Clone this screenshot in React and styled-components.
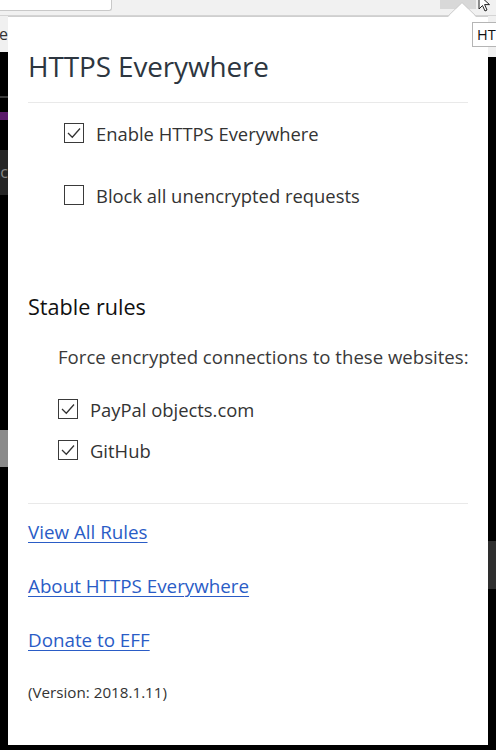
import React from "react";
import styled, { createGlobalStyle } from "styled-components";

const Global = createGlobalStyle`
  html, body { margin: 0; padding: 0; background: #000; }
  body { font-family: "Open Sans", "Noto Sans", sans-serif; }
`;

const Screen = styled.div`
  position: relative;
  width: 496px;
  height: 750px;
  overflow: hidden;
  display: grid;
  grid-template-columns: 8px 480px 8px;
  grid-template-rows: 16px 729px 5px;
  background: #000;
`;

const Toolbar = styled.div`
  grid-column: 1 / 4;
  display: flex;
  align-items: flex-start;
  background: #f1f1f1;
  border-bottom: 1px solid #d4d4d4;
  box-sizing: border-box;
`;

const UrlBox = styled.div`
  width: 111px;
  height: 10px;
  background: #fff;
  border-right: 1px solid #c9c9c9;
  border-bottom: 1px solid #c9c9c9;
  border-bottom-right-radius: 3px;
`;

const ToolButton = styled.div`
  margin-left: auto;
  margin-right: 20px;
  width: 36px;
  height: 9px;
  background: #d8d8d8;
`;

const Gutter = styled.div`
  display: flex;
  flex-direction: column;
  background: #000;
  overflow: hidden;
`;

const GutterPiece = styled.div`
  height: ${(p) => p.$h}px;
  background: ${(p) => p.$bg};
  color: ${(p) => p.$fg || "#333"};
  font-size: 16px;
  line-height: ${(p) => p.$h}px;
  white-space: nowrap;
  direction: rtl;
  overflow: hidden;
`;

const Popup = styled.div`
  position: relative;
  background: #fff;
  border-top: 1px solid #cfcfcf;
  box-sizing: border-box;
  padding: 31px 20px 0;
  display: flex;
  flex-direction: column;
  color: #333;
`;

const Title = styled.h1`
  margin: 0;
  font-weight: 400;
  font-size: 27.9px;
  line-height: 36px;
  color: #2d3640;
  letter-spacing: -0.1px;
`;

const Divider = styled.hr`
  margin: ${(p) => p.$mt}px 0 0;
  border: none;
  height: 1px;
  background: #e9e9e9;
`;

const Row = styled.label`
  display: flex;
  align-items: center;
  gap: 12px;
  height: 28px;
  margin-top: ${(p) => p.$mt}px;
  padding-left: ${(p) => p.$indent}px;
  font-size: ${(p) => p.$fs}px;
  color: #333;
`;

const Box = styled.span`
  width: 20px;
  height: 20px;
  box-sizing: border-box;
  border: 1.5px solid #3a3a3a;
  background: #fff;
  display: flex;
  align-items: center;
  justify-content: center;
  flex: none;
`;

const Heading = styled.h2`
  margin: ${(p) => p.$mt}px 0 0;
  font-weight: 400;
  font-size: 21.6px;
  line-height: 30px;
  color: #111;
`;

const Note = styled.p`
  margin: 22px 0 0;
  padding-left: 30px;
  font-size: 18.6px;
  line-height: 26px;
  color: #3a3a3a;
  white-space: nowrap;
`;

const Link = styled.a`
  margin-top: ${(p) => p.$mt}px;
  align-self: flex-start;
  font-size: 18.8px;
  line-height: 26px;
  color: #2a5cc6;
  text-decoration: underline;
  text-underline-offset: 3px;
  text-decoration-thickness: 1px;
`;

const Version = styled.div`
  margin-top: 28px;
  font-size: 15.2px;
  line-height: 22px;
  color: #333;
`;

const Pointer = styled.svg`
  position: absolute;
  top: 2px;
  left: 448px;
`;

const Tooltip = styled.div`
  position: absolute;
  top: 22px;
  left: 472px;
  width: 24px;
  height: 25px;
  background: #fff;
  border: 1px solid #b5b5b5;
  border-right: none;
  box-sizing: border-box;
  font-size: 14.5px;
  line-height: 23px;
  padding-left: 4px;
  color: #111;
  white-space: nowrap;
`;

const Cursor = styled.svg`
  position: absolute;
  top: -6px;
  left: 478px;
`;

const Check = () => (
  <svg width="16" height="16" viewBox="0 0 16 16">
    <polyline points="2,8 6.3,12.2 14,3.5" fill="none" stroke="#333" strokeWidth="1.3" />
  </svg>
);

const CheckRow = ({ checked, label, mt, indent }) => (
  <Row $mt={mt} $indent={indent} $fs={18.4}>
    <Box>{checked && <Check />}</Box>
    <span>{label}</span>
  </Row>
);

export default function App() {
  return (
    <>
      <Global />
      <Screen>
        <Toolbar>
          <UrlBox />
          <ToolButton />
        </Toolbar>
        <Gutter>
          <GutterPiece $h={36} $bg="#f0f0f0">e</GutterPiece>
          <GutterPiece $h={44} $bg="#000" />
          <GutterPiece $h={2} $bg="#3a3a3a" />
          <GutterPiece $h={14} $bg="#000" />
          <GutterPiece $h={8} $bg="#5a1a6a" />
          <GutterPiece $h={30} $bg="#000" />
          <GutterPiece $h={45} $bg="#262626" $fg="#888">c</GutterPiece>
          <GutterPiece $h={235} $bg="#000" />
          <GutterPiece $h={37} $bg="#8a8a8a" />
        </Gutter>
        <Popup>
          <Title>HTTPS Everywhere</Title>
          <Divider $mt={18} />
          <CheckRow checked label="Enable HTTPS Everywhere" mt={16} indent={36} />
          <CheckRow label="Block all unencrypted requests" mt={34} indent={36} />
          <Heading $mt={83}>Stable rules</Heading>
          <Note>Force encrypted connections to these websites:</Note>
          <CheckRow checked label="PayPal objects.com" mt={25} indent={30} />
          <CheckRow checked label="GitHub" mt={13} indent={30} />
          <Divider $mt={39} />
          <Link href="#" $mt={15}>View All Rules</Link>
          <Link href="#" $mt={28}>About HTTPS Everywhere</Link>
          <Link href="#" $mt={28}>Donate to EFF</Link>
          <Version>(Version: 2018.1.11)</Version>
        </Popup>
        <Gutter>
          <GutterPiece $h={41} $bg="#f0f0f0" />
          <GutterPiece $h={484} $bg="#000" />
          <GutterPiece $h={48} $bg="#2e2e2e" />
        </Gutter>
        <Gutter />
        <Gutter />
        <Gutter />
        <Pointer width="28" height="15" viewBox="0 0 28 15">
          <polygon points="0,15 14,1 28,15" fill="#fff" />
          <polyline points="0,14 14,0.5 28,14" fill="none" stroke="#cfcfcf" strokeWidth="1" />
        </Pointer>
        <Tooltip>HT</Tooltip>
        <Cursor width="16" height="20" viewBox="0 0 16 20">
          <path d="M1 1 L1 15 L4.5 11.5 L7 17 L9 16 L6.6 10.6 L11.5 10.6 Z" fill="#fff" stroke="#222" strokeWidth="1" />
        </Cursor>
      </Screen>
    </>
  );
}
